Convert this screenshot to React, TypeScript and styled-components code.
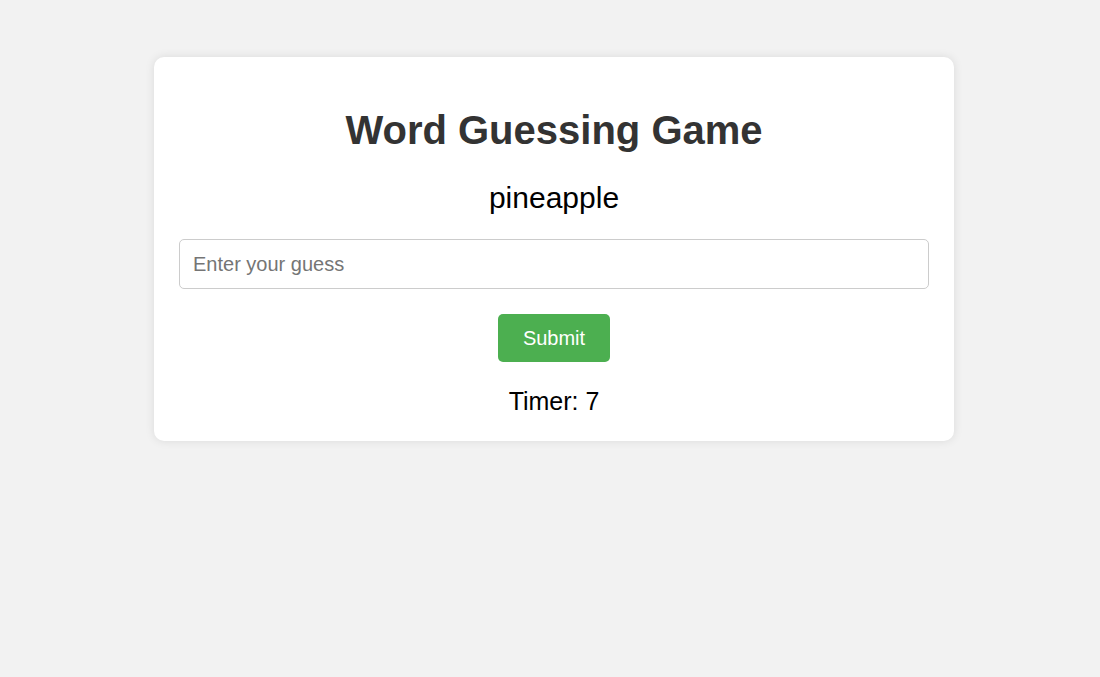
import React, { useState } from "react";
import styled, { createGlobalStyle } from "styled-components";

const GlobalStyle = createGlobalStyle`
  html, body {
    margin: 0;
    padding: 0;
    background: #f2f2f2;
    font-family: "Liberation Sans", Arial, sans-serif;
  }
`;

const Page = styled.div`
  min-height: 677px;
  box-sizing: border-box;
  padding: 57px 0 0 8px;
  display: flex;
  flex-direction: column;
  align-items: center;
`;

const Card = styled.div`
  width: 800px;
  box-sizing: border-box;
  background: #ffffff;
  border-radius: 10px;
  box-shadow: 0 0 10px rgba(0, 0, 0, 0.1);
  padding: 50px 25px 26px;
  display: flex;
  flex-direction: column;
  align-items: center;
  text-align: center;
`;

const Title = styled.h1`
  margin: 0;
  font-size: 40px;
  line-height: 46px;
  font-weight: bold;
  color: #333333;
`;

const Word = styled.div`
  margin-top: 28px;
  font-size: 30px;
  line-height: 34px;
  color: #000000;
`;

const GuessInput = styled.input`
  margin-top: 24px;
  width: 100%;
  height: 50px;
  box-sizing: border-box;
  padding: 0 13px;
  border: 1px solid #cccccc;
  border-radius: 5px;
  font-family: "Liberation Sans", Arial, sans-serif;
  font-size: 20px;
  color: #000;
  outline: none;
  &::placeholder {
    color: #757575;
  }
`;

const SubmitButton = styled.button`
  margin-top: 25px;
  height: 48px;
  padding: 0 25px;
  border: none;
  border-radius: 5px;
  background: #4caf50;
  color: #ffffff;
  font-family: "Liberation Sans", Arial, sans-serif;
  font-size: 20px;
  cursor: pointer;
`;

const Timer = styled.div`
  margin-top: 25px;
  font-size: 25px;
  line-height: 28px;
  color: #000000;
`;

export default function App() {
  const [guess, setGuess] = useState("");
  return (
    <>
      <GlobalStyle />
      <Page>
        <Card>
          <Title>Word Guessing Game</Title>
          <Word>pineapple</Word>
          <GuessInput
            type="text"
            placeholder="Enter your guess"
            value={guess}
            onChange={(e) => setGuess(e.target.value)}
          />
          <SubmitButton>Submit</SubmitButton>
          <Timer>Timer: 7</Timer>
        </Card>
      </Page>
    </>
  );
}
